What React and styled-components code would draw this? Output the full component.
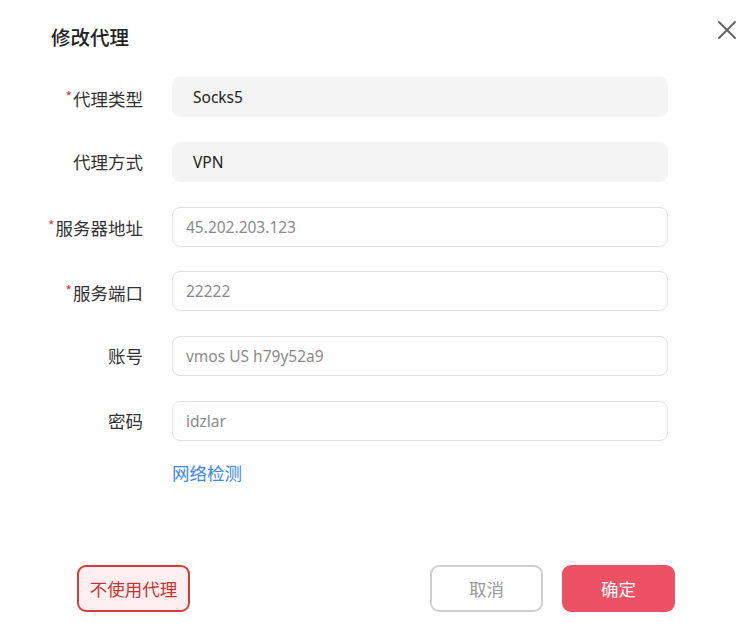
import React from "react";
import styled, { createGlobalStyle } from "styled-components";

const GlobalStyle = createGlobalStyle`
  html, body {
    margin: 0;
    padding: 0;
    background: #fff;
  }
  body {
    font-family: "Noto Sans", "Noto Sans CJK SC", sans-serif;
  }
`;

const Dialog = styled.div`
  position: relative;
  width: 752px;
  height: 644px;
  background: #fff;
  box-sizing: border-box;
  padding: 24px 0 0 0;
  display: flex;
  flex-direction: column;
`;

const Title = styled.div`
  padding-left: 51px;
  font-family: "Noto Sans CJK SC", sans-serif;
  font-size: 19.5px;
  line-height: 26px;
  color: #222;
  font-weight: 500;
`;

const CloseButton = styled.button`
  position: absolute;
  top: 19px;
  right: 14px;
  width: 22px;
  height: 22px;
  padding: 0;
  border: none;
  background: none;
  display: flex;
  align-items: center;
  justify-content: center;
  cursor: pointer;
`;

const Form = styled.div`
  margin-top: 27px;
  display: grid;
  grid-template-columns: 143px 496px;
  column-gap: 29px;
  row-gap: 24.8px;
  align-items: center;
`;

const Label = styled.div`
  font-family: "Noto Sans CJK SC", sans-serif;
  font-size: 17.5px;
  color: #333;
  text-align: right;
  line-height: 24px;
`;

const Star = styled.span`
  color: #d63a3a;
  font-size: 14px;
  vertical-align: 4px;
  margin-right: 1px;
`;

const Field = styled.div`
  height: 40px;
  box-sizing: border-box;
  border-radius: 8px;
  display: flex;
  align-items: center;
  font-size: 15.5px;
  ${(p) =>
    p.$readonly
      ? `
    background: #f4f4f5;
    color: #222;
    padding-left: 21px;
  `
      : `
    background: #fff;
    border: 1.5px solid #dfdfe6;
    color: #8a8a8a;
    padding-left: 13px;
  `}
`;

const LinkRow = styled.div`
  margin-top: 22px;
  padding-left: 172px;
`;

const Link = styled.a`
  font-family: "Noto Sans CJK SC", sans-serif;
  font-size: 17.5px;
  line-height: 20px;
  color: #3c86ee;
  cursor: pointer;
`;

const Footer = styled.div`
  margin-top: 80px;
  padding: 0 77px 0 77px;
  display: flex;
  align-items: center;
`;

const Spacer = styled.div`
  flex: 1;
`;

const Button = styled.button`
  width: 113px;
  height: 47px;
  box-sizing: border-box;
  border-radius: 9px;
  font-family: "Noto Sans CJK SC", sans-serif;
  font-size: 17.5px;
  cursor: pointer;
  ${(p) =>
    p.$variant === "danger" &&
    `
    border: 2px solid #d23c3c;
    background: #fdeff0;
    color: #c83333;
  `}
  ${(p) =>
    p.$variant === "default" &&
    `
    border: 2px solid #cfcfcf;
    background: #fff;
    color: #9a9a9a;
    margin-right: 19px;
  `}
  ${(p) =>
    p.$variant === "primary" &&
    `
    border: none;
    background: #ec5264;
    color: #fff;
  `}
`;

const fields = [
  { label: "代理类型", value: "Socks5", required: true, readonly: true },
  { label: "代理方式", value: "VPN", readonly: true },
  { label: "服务器地址", value: "45.202.203.123", required: true },
  { label: "服务端口", value: "22222", required: true },
  { label: "账号", value: "vmos US h79y52a9" },
  { label: "密码", value: "idzlar" },
];

export default function App() {
  return (
    <>
      <GlobalStyle />
      <Dialog>
        <Title>修改代理</Title>
        <CloseButton>
          <svg width="20" height="20" viewBox="0 0 20 20">
            <path
              d="M2 2 L18 18 M18 2 L2 18"
              stroke="#666"
              strokeWidth="2"
              strokeLinecap="round"
            />
          </svg>
        </CloseButton>
        <Form>
          {fields.map((f) => (
            <React.Fragment key={f.label}>
              <Label>
                {f.required && <Star>*</Star>}
                {f.label}
              </Label>
              <Field $readonly={f.readonly}>{f.value}</Field>
            </React.Fragment>
          ))}
        </Form>
        <LinkRow>
          <Link>网络检测</Link>
        </LinkRow>
        <Footer>
          <Button $variant="danger">不使用代理</Button>
          <Spacer />
          <Button $variant="default">取消</Button>
          <Button $variant="primary">确定</Button>
        </Footer>
      </Dialog>
    </>
  );
}
